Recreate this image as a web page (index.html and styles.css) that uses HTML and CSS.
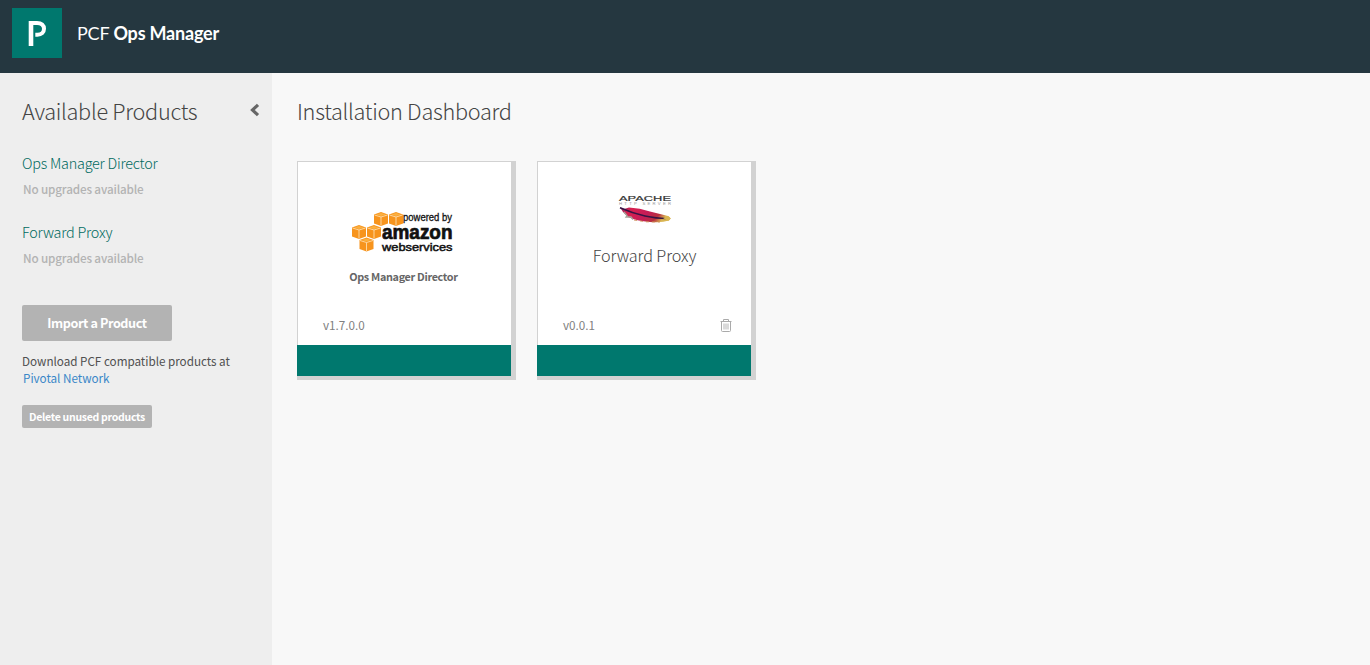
FILE: index.html
```html
<!DOCTYPE html>
<html lang="en">
<head>
<meta charset="utf-8">
<title>PCF Ops Manager</title>
<link rel="stylesheet" href="styles.css">
</head>
<body>
<header class="topbar">
  <span class="logo">
    <svg width="50" height="50" viewBox="0 0 50 50" fill="none" stroke="#fff"><path d="M19 13V38" stroke-width="4.600"/><path d="M19 14.900H25C29.500 14.900 32 17.200 32 20.800S29.500 26.700 25.500 26.700H23.300" stroke-width="4"/></svg>
  </span>
  <span class="brand">PCF <b>Ops Manager</b></span>
</header>
<div class="layout">
  <aside class="sidebar">
    <div class="side-head">
      <h2 class="title title-side">Available Products</h2>
      <svg class="chevron" width="10" height="14" viewBox="0 0 10 14" fill="none" stroke="#666" stroke-width="3.200"><path d="M8 1.800L2.500 7L8 12.200"/></svg>
    </div>
    <ul class="products">
      <li class="product"><a class="product-name">Ops Manager Director</a><p class="product-note">No upgrades available</p></li>
      <li class="product"><a class="product-name">Forward Proxy</a><p class="product-note">No upgrades available</p></li>
    </ul>
    <button class="btn btn-import">Import a Product</button>
    <p class="download">Download PCF compatible products at <a class="network">Pivotal Network</a></p>
    <button class="btn btn-delete">Delete unused products</button>
  </aside>
  <main class="main">
    <h1 class="title title-main">Installation Dashboard</h1>
    <div class="tiles">
      <section class="tile">
        <div class="tile-body tile-aws">
          <svg class="aws" width="106" height="42" viewBox="0 0 106 42">
            <defs>
              <g id="cube">
                <path d="M0 2.500L7 0L14 2.500V11.500L7 14L0 11.500Z" fill="#f7941d"/>
                <path d="M0.500 3L7 5L13.500 3M7 5V13.500" fill="none" stroke="#fddcab" stroke-width="0.900"/>
                <path d="M2 2.500L7 1L12 2.500L7 4Z" fill="#fbb040"/>
              </g>
            </defs>
            <use href="#cube" x="22" y="1"/>
            <use href="#cube" x="37" y="1"/>
            <use href="#cube" x="0" y="14"/>
            <use href="#cube" x="15" y="14"/>
            <use href="#cube" x="7.500" y="26.500"/>
            <text class="logo-small" x="51" y="9.500" textLength="49" lengthAdjust="spacingAndGlyphs">powered by</text>
            <text class="logo-amazon" x="30" y="28" textLength="70.500" lengthAdjust="spacingAndGlyphs">amazon</text>
            <text class="logo-web" x="30" y="39.500" textLength="70.500" lengthAdjust="spacingAndGlyphs">webservices</text>
          </svg>
          <h3 class="tile-name-small">Ops Manager Director</h3>
        </div>
        <div class="tile-meta"><span>v1.7.0.0</span></div>
        <div class="tile-status"></div>
      </section>
      <section class="tile">
        <div class="tile-body tile-apache">
          <svg class="apache" width="54" height="32" viewBox="0 0 54 32">
            <defs>
              <linearGradient id="plume" x1="0" x2="1" y1="0" y2="0.300">
                <stop offset="0" stop-color="#8d2a63"/><stop offset="0.250" stop-color="#d8204f"/><stop offset="0.600" stop-color="#c61c58"/><stop offset="0.850" stop-color="#b8303f"/><stop offset="1" stop-color="#d9b552"/>
              </linearGradient>
            </defs>
            <text class="logo-apache" x="1" y="8.500" textLength="52" lengthAdjust="spacingAndGlyphs">APACHE</text>
            <text class="logo-http" x="1" y="13" textLength="52">HTTP SERVER</text>
            <path d="M2 15.200L6 17L11 15.500Q22 16 32 19.500Q42 22 50 24Q54 26 51 28.500Q44 31 32 30Q18 29 10 25L5 20Z" fill="url(#plume)"/>
            <path d="M6 20L9 23.500L8 25L13 25L15 27.500" fill="none" stroke="#a3a59a" stroke-width="1.300"/>
            <path d="M2 15.800Q15 21.500 27 24T48 26.500" fill="none" stroke="#351445" stroke-width="1.600"/>
            <path d="M16 28L28 29.800L42 30" fill="none" stroke="#c98a50" stroke-width="0.900" stroke-dasharray="3 3"/>
            <path d="M45 26L50 24L53 26.500L50 29Z" fill="#d9b552"/>
          </svg>
          <h3 class="tile-name">Forward Proxy</h3>
        </div>
        <div class="tile-meta"><span>v0.0.1</span>
          <svg width="12" height="13" viewBox="0 0 12 13" fill="none" stroke="#aaa"><path d="M0.500 2.500H11.500M3.500 2V0.500H8.500V2M1.500 3V11.500Q1.500 12.500 2.500 12.500H9.500Q10.500 12.500 10.500 11.500V3"/><path d="M4 4.500V10.500M6 4.500V10.500M8 4.500V10.500" stroke-width="0.900"/></svg>
        </div>
        <div class="tile-status"></div>
      </section>
    </div>
  </main>
</div>
</body>
</html>
```
FILE: styles.css
```css
* { box-sizing: border-box; }
body { margin: 0; background: #f8f8f8; color: #666; font-family: "Noto Sans CJK SC", "Open Sans", sans-serif; font-size: 12px; }
h1, h2, h3, p, ul { margin: 0; padding: 0; font-weight: 400; }
ul { list-style: none; }
svg { display: block; flex: none; }
.topbar { height: 73px; background: #253740; display: flex; align-items: flex-start; padding: 8px 12px; gap: 15px; }
.logo { width: 50px; height: 50px; background: #00786e; }
.brand { font-family: Lato, sans-serif; color: #fff; font-size: 18px; line-height: 50px; letter-spacing: -0.2px; white-space: nowrap; }
.layout { display: flex; height: 592px; }
.sidebar { width: 272px; background: #eee; padding: 22px 12px 0 22px; }
.side-head { display: flex; justify-content: space-between; align-items: flex-start; height: 58px; }
.chevron { margin-top: 8px; }
.title { font-size: 21.7px; line-height: 32px; font-weight: 300; letter-spacing: -0.29px; white-space: nowrap; color: #444; }
.product { height: 69px; }
.product-name { display: block; color: #006a60; font-size: 14.4px; line-height: 20px; font-weight: 300; letter-spacing: -0.22px; }
.product-note { color: #b3b3b3; font-size: 11.7px; line-height: 18px; padding: 7px 0 0 1px; font-weight: 500; letter-spacing: -0.15px; }
.btn { display: block; border: 0; border-radius: 2px; background: #b3b3b3; color: #fff; font-family: inherit; font-weight: 700; padding: 0; white-space: nowrap; }
.btn-import { width: 150px; height: 36px; margin-top: 14px; padding-bottom: 2px; font-size: 12.6px; letter-spacing: -0.4px; }
.download { margin-top: 11px; line-height: 17px; font-size: 11.7px; letter-spacing: -0.02px; color: #505050; white-space: nowrap; }
.network { display: block; color: #3a87c8; padding-left: 1px; }
.btn-delete { width: 130px; height: 23px; margin-top: 19px; font-size: 10.5px; letter-spacing: -0.29px; }
.main { flex: 1; padding: 22px 25px; }
.tiles { display: flex; gap: 21px; margin-top: 34px; }
.tile { width: 219px; height: 219px; background: #fff; border-style: solid; border-color: #d2d2d2; border-width: 1px 5px 4px 0; display: flex; flex-direction: column; }
.tile-body { height: 149px; border-left: 1px solid #d2d2d2; display: flex; flex-direction: column; align-items: center; }
.tile-aws { padding-top: 49px; }
.tile-apache { padding-top: 30px; }
.tile-name-small { font-size: 10.8px; line-height: 18px; font-weight: 700; letter-spacing: -0.32px; margin: 14px 2px 0 0; }
.tile-name { font-size: 16.2px; line-height: 24px; font-weight: 300; letter-spacing: -0.08px; margin-top: 19px; color: #444; }
.tile-meta { height: 34px; border-left: 1px solid #d2d2d2; display: flex; align-items: center; justify-content: space-between; padding: 0 19px 5px 25px; color: #808080; font-size: 11.7px; }
.tile-meta span { padding-bottom: 2px; }
.tile-status { height: 31px; background: #00786e; }
.logo-small, .logo-amazon, .logo-web { font-family: "Liberation Sans", sans-serif; fill: #111; stroke: #111; }
.logo-small { font-size: 10px; stroke-width: 0.3px; }
.logo-amazon { font-size: 20px; font-weight: 700; stroke-width: 0.7px; }
.logo-web { font-size: 11.5px; stroke-width: 0.5px; }
.logo-apache { font-family: "Liberation Sans", sans-serif; font-size: 8px; fill: #333; stroke: #333; stroke-width: 0.2px; }
.logo-http { font-family: "Liberation Sans", sans-serif; font-size: 4.2px; fill: #999; }
```
